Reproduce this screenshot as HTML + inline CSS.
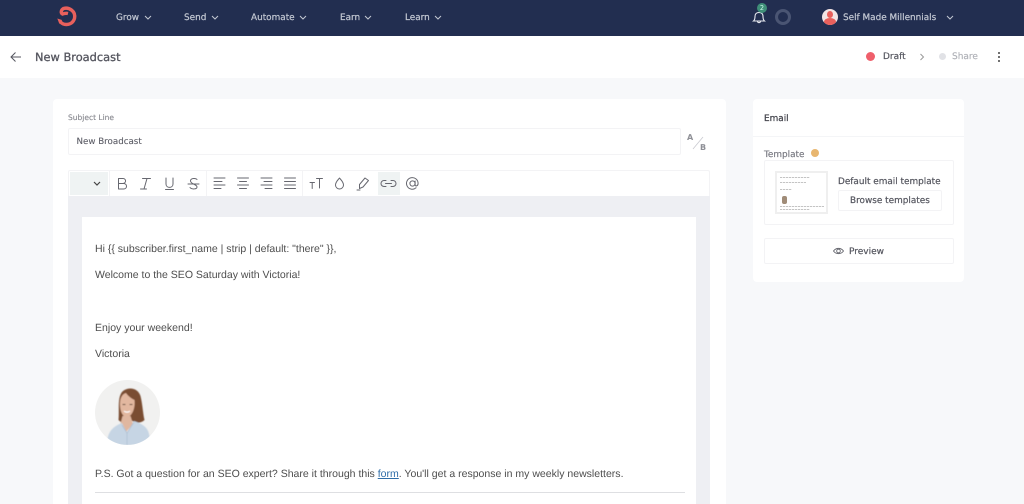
<!DOCTYPE html>
<html><head><meta charset="utf-8"><style>
*{box-sizing:border-box}
html,body{margin:0;padding:0}
body{width:1024px;height:504px;overflow:hidden;background:#f7f8fa;position:relative;font-family:"DejaVu Sans","Liberation Sans",sans-serif;color:#55565f;text-rendering:geometricPrecision}
#w{position:absolute;left:0;top:0;width:1024px;height:504px;overflow:hidden;filter:blur(.35px)}
.a{position:absolute;white-space:nowrap}
.nav{color:#c3c8d3;font-size:8.9px;top:12px;line-height:12px;-webkit-text-stroke:.2px #c3c8d3}
.body{font-family:"Liberation Sans",sans-serif;font-size:10.52px;color:#4d4d4d;left:95px;line-height:14px}
.t{font-size:8.9px;line-height:13px;color:#55565f;-webkit-text-stroke:.2px #55565f}
svg{position:absolute;overflow:visible}
.s{fill:none;stroke:#66676f;stroke-width:1;stroke-linecap:round;stroke-linejoin:round}
.box{position:absolute;background:#fff;border:1px solid #f3f3f5;border-radius:2px}
.d{position:absolute;height:1px;background:repeating-linear-gradient(90deg,#c4c4c4 0 2px,#efefef 2px 3px)}
</style></head><body><div id="w">
<div class="a" style="left:0;top:0;width:1024px;height:36px;background:#222e50"></div>
<svg style="left:50px;top:0" width="36" height="34" viewBox="50 0 36 34"><path d="M60 21C62.500 26 72 26 74.500 18.500C76 11 69 7 63.500 8.500C61 10 60.500 13 62.500 14C64 13.500 66 13 68 13.500" fill="none" stroke="#e8605c" stroke-width="3.400"/><path d="M57.300 18.500L62 20L59.500 24z" fill="#e8605c"/></svg>
<div class="a nav" style="left:116px">Grow</div><svg style="left:144px;top:15px" width="8" height="5"><path d="M1 1l3 3 3-3" fill="none" stroke="#c3c8d3"/></svg>
<div class="a nav" style="left:184px">Send</div><svg style="left:211px;top:15px" width="8" height="5"><path d="M1 1l3 3 3-3" fill="none" stroke="#c3c8d3"/></svg>
<div class="a nav" style="left:251px">Automate</div><svg style="left:299px;top:15px" width="8" height="5"><path d="M1 1l3 3 3-3" fill="none" stroke="#c3c8d3"/></svg>
<div class="a nav" style="left:340px">Earn</div><svg style="left:364px;top:15px" width="8" height="5"><path d="M1 1l3 3 3-3" fill="none" stroke="#c3c8d3"/></svg>
<div class="a nav" style="left:405px">Learn</div><svg style="left:434px;top:15px" width="8" height="5"><path d="M1 1l3 3 3-3" fill="none" stroke="#c3c8d3"/></svg>
<svg style="left:752px;top:9px" width="14" height="15" viewBox="0 0 14 15"><path d="M1.500 12c1.200-1 1.500-2 1.500-4.500C3 5 4.500 3.500 7 3.500S11 5 11 7.500c0 2.500.3 3.500 1.500 4.500zM5.500 12.500c.3 1.500 2.700 1.500 3 0" fill="none" stroke="#e8eaf0" stroke-width="1.100"/></svg>
<div class="a" style="left:757px;top:3px;width:10px;height:10px;border-radius:50%;background:#3f8f78;color:#cfe;font-size:6.500px;line-height:10px;text-align:center">2</div>
<div class="a" style="left:775px;top:9px;width:16px;height:16px;border-radius:50%;border:3px solid #4a5573"></div>
<div class="a" style="left:822px;top:9px;width:16px;height:16px;border-radius:50%;background:#f3e4e4;overflow:hidden"><div class="a" style="left:5px;top:2px;width:6px;height:7px;border-radius:50%;background:#e8605c"></div><div class="a" style="left:2px;top:9px;width:12px;height:8px;border-radius:50%;background:#e8605c"></div></div>
<div class="a nav" style="left:843px">Self Made Millennials</div><svg style="left:946px;top:15px" width="8" height="5"><path d="M1 1l3 3 3-3" fill="none" stroke="#c3c8d3"/></svg>

<div class="a" style="left:0;top:36px;width:1024px;height:42px;background:#fff"></div>
<svg style="left:10px;top:51px" width="12" height="12" viewBox="0 0 12 12"><path d="M11 6H1M5.500 1.500L1 6l4.500 4.500" fill="none" stroke="#55565f" stroke-width="1"/></svg>
<div class="a" style="left:35px;top:50px;font-size:11.400px;line-height:15px;color:#55565f;-webkit-text-stroke:.3px #55565f">New Broadcast</div>
<div class="a" style="left:866px;top:52px;width:9px;height:9px;border-radius:50%;background:#ef5f6b"></div>
<div class="a t" style="left:883px;top:51px;font-size:9px">Draft</div>
<svg style="left:919px;top:53px" width="6" height="8"><path d="M1.500 1l3 3-3 3" fill="none" stroke="#999"/></svg>
<div class="a" style="left:939px;top:53px;width:7px;height:7px;border-radius:50%;background:#e1e2e6"></div>
<div class="a" style="left:952px;top:51px;font-size:9px;line-height:13px;color:#aeb0b6;-webkit-text-stroke:.15px #aeb0b6">Share</div>
<div class="a" style="left:998px;top:52px;width:2px;height:2px;background:#444;box-shadow:0 4px #444,0 8px #444;border-radius:50%"></div>

<div class="a" style="left:53px;top:99px;width:673px;height:405px;background:#fff;border-radius:4px 4px 0 0"></div>
<div class="a" style="left:68px;top:113px;font-size:7.500px;line-height:10px;color:#85868d;-webkit-text-stroke:.1px #85868d">Subject Line</div>
<div class="box" style="left:68px;top:128px;width:613px;height:27px"></div>
<div class="a" style="left:76.500px;top:136px;font-size:8.700px;line-height:13px;color:#5c5d66;-webkit-text-stroke:.1px #5c5d66">New Broadcast</div>
<div class="a" style="left:687px;top:132px;font-size:8px;line-height:11px;font-weight:bold;color:#8e8f96">A</div>
<div class="a" style="left:700px;top:142px;font-size:8px;line-height:11px;font-weight:bold;color:#8e8f96">B</div>
<svg style="left:692px;top:135px" width="12" height="16"><path d="M1 14L11 2" stroke="#c9cad0" stroke-width=".8"/></svg>

<div class="box" style="left:68px;top:170px;width:642px;height:30px;border-bottom:0"></div>
<div class="a" style="left:70px;top:172px;width:38px;height:23px;background:#eff3f3"></div>
<svg style="left:93px;top:181px" width="8" height="5"><path d="M1 1l3 3 3-3" fill="none" stroke="#444" stroke-width="1.200"/></svg>
<div class="a" style="left:378px;top:172px;width:22px;height:23px;background:#eff3f3"></div>
<div class="a" style="left:109px;top:171px;width:1px;height:25px;background:#f3f3f5"></div>
<div class="a" style="left:206px;top:171px;width:1px;height:25px;background:#f3f3f5"></div>
<div class="a" style="left:302px;top:171px;width:1px;height:25px;background:#f3f3f5"></div>
<svg style="left:0;top:0" width="1024" height="504" viewBox="0 0 1024 504">
<g class="s">
<path d="M118.500 178.500h4.500c3.500 0 3.500 5-.5 5h-4zM118.500 183.500h5c4 0 4 5.500 0 5.500h-5z"/>
<path d="M142.500 178.500h8M140.500 189h6M147 178.500l-3 10.500"/>
<path d="M166 178v6c0 4.500 7 4.500 7 0v-6M165.500 189.500h8"/>
<path d="M197 179.500c-1-1.500-6-1.500-6.500 1-.2 1.500 1 2.500 3 3.500 2 1 3.500 1.500 3.500 3 0 2.500-5.500 2.500-7 .5M188 184h11"/>
<path d="M214 178h11M214 181.500h8M214 185h11M214 188.500h7"/>
<path d="M237.500 178h11M239.500 181.500h7M237.500 185h11M239.500 188.500h7"/>
<path d="M261 178h11M264 181.500h8M261 185h11M265 188.500h7"/>
<path d="M284.500 178h11M284.500 181.500h11M284.500 185h11M284.500 188.500h11"/>
<path d="M310 182.500h4.500M312.200 182.500v6M316.500 178.500h6M319.500 178.500v9.500"/>
<path d="M339.500 178c-1.500 2-4 4-4 7a4 4 0 0 0 8 0c0-3-2.500-5-4-7z"/>
<path d="M359.500 184.500l5.500-6.500 3.500 2.500-5.500 6.500-3.500 1.500zM357 190h3"/>
<path d="M386 180.500h-2a3 3 0 0 0 0 6h2M391 180.500h2a3 3 0 0 1 0 6h-2M385.500 183.500h6"/>
<circle cx="412.500" cy="183.500" r="2.600"/><path d="M415.100 181v3.500c0 2.500 3 1.500 3-1a5.800 5.800 0 1 0-2 4.300"/>
</g></svg>

<div class="a" style="left:68px;top:196px;width:642px;height:308px;background:#eeeff3"></div>
<div class="a" style="left:82px;top:217px;width:614px;height:287px;background:#fff"></div>
<div class="a body" style="top:242px">Hi {{ subscriber.first_name | strip | default: "there" }},</div>
<div class="a body" style="top:268px">Welcome to the SEO Saturday with Victoria!</div>
<div class="a body" style="top:321px">Enjoy your weekend!</div>
<div class="a body" style="top:347px">Victoria</div>
<svg style="left:95px;top:380px" width="65" height="65" viewBox="95 380 65 65">
<defs><clipPath id="c"><circle cx="127.500" cy="412.500" r="32.500"/></clipPath><filter id="f"><feGaussianBlur stdDeviation=".6"/></filter></defs>
<g clip-path="url(#c)"><rect x="95" y="380" width="65" height="65" fill="#f1f1f0"/>
<g filter="url(#f)">
<path d="M118.500 420C119.500 410 117 396 123 391C129 386.500 138 388 140.500 396C142.500 404 143 414 144.500 420C140 424 135 423 131 420L122 423z" fill="#7a4d33"/>
<path d="M120 404C120 397 123 393.500 126 393C128 396 132 399 134.500 400C135.500 410 131 417 127 417C122.500 417 120 411 120 404z" fill="#e2b79f"/>
<path d="M122.500 404.500h3M129.500 404.500h3" stroke="#5a3d30" stroke-width="1"/><path d="M124 411c1.500 1.500 4.500 1.500 6 0" stroke="#fff" stroke-width="1.200" fill="none"/>
<path d="M122.500 416h8l2.500 8-7 8-5.500-8z" fill="#e0b7a0"/>
<path d="M107 445C107 434 111 427 122 423L127 433L134 421C143 424 149 428 149.500 437L148 445z" fill="#c6d5e4"/>
<path d="M127 433V445M122 425l5 8 7-11" stroke="#aebfd2" stroke-width=".8" fill="none"/>
</g></g></svg>
<div class="a body" style="top:467px">P.S. Got a question for an SEO expert? Share it through this <span style="color:#2f6da8;text-decoration:underline">form</span>. You'll get a response in my weekly newsletters.</div>
<div class="a" style="left:95px;top:492px;width:590px;height:1px;background:#dedfe2"></div>

<div class="a" style="left:753px;top:99px;width:211px;height:183px;background:#fff;border-radius:4px"></div>
<div class="a" style="left:753px;top:136px;width:211px;height:1px;background:#f4f5f7"></div>
<div class="a t" style="left:764px;top:113px;color:#44454d;-webkit-text-stroke:.25px #44454d">Email</div>
<div class="a t" style="left:764px;top:149px;color:#777880;-webkit-text-stroke:.15px #777880">Template</div>
<div class="a" style="left:811px;top:149px;width:8px;height:8px;border-radius:50%;background:#e8b66f"></div>
<div class="box" style="left:764px;top:160px;width:190px;height:65px"></div>
<div class="a" style="left:775px;top:171px;width:53px;height:43px;background:#fff;border:2px solid #efefef">
<div class="d" style="left:3px;top:4px;width:30px"></div>
<div class="d" style="left:3px;top:9px;width:26px"></div>
<div class="d" style="left:3px;top:16px;width:12px"></div>
<div class="a" style="left:5px;top:23px;width:5px;height:8px;background:#a08c78;border-radius:2px"></div>
<div class="d" style="left:3px;top:33px;width:44px"></div>
<div class="d" style="left:3px;top:36px;width:30px"></div>
</div>
<div class="a t" style="left:838px;top:176px">Default email template</div>
<div class="box" style="left:838px;top:190px;width:104px;height:21px"></div>
<div class="a t" style="left:850px;top:195px">Browse templates</div>
<div class="box" style="left:764px;top:238px;width:190px;height:26px"></div>
<svg style="left:833px;top:246px" width="11" height="10" viewBox="0 0 11 10"><path d="M.5 5C3 1.500 8 1.500 10.500 5 8 8.500 3 8.500.5 5z" fill="none" stroke="#66676f" stroke-width=".9"/><circle cx="5.500" cy="5" r="1.800" fill="none" stroke="#66676f" stroke-width=".9"/></svg>
<div class="a t" style="left:849px;top:246px;font-size:9px">Preview</div>
</div></body></html>
